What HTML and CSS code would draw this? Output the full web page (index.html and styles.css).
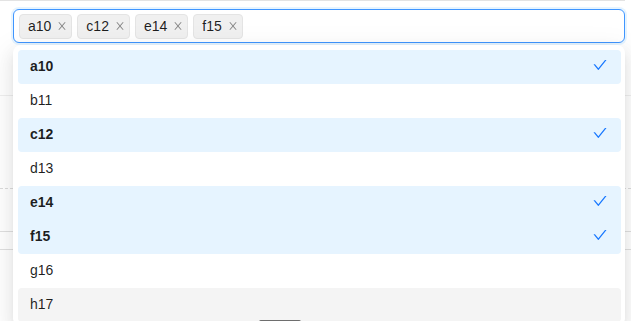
FILE: index.html
```html
<!DOCTYPE html>
<html lang="en">
<head>
    <meta charset="UTF-8">
    <title>Select</title>
    <link rel="stylesheet" href="styles.css">
</head>
<body>
<div class="page">
    <div class="topline"></div>

    <div class="field">
        <div class="select">
            <span class="tag">a10<svg class="tag-close" viewBox="64 64 896 896"><path d="M563.8 512l262.5-312.9c4.4-5.2.7-13.1-6.1-13.1h-79.8c-4.7 0-9.2 2.1-12.3 5.7L511.6 449.8 295.1 191.7c-3-3.6-7.5-5.7-12.3-5.7H203c-6.8 0-10.5 7.9-6.1 13.1L459.4 512 196.9 824.9A7.95 7.95 0 00203 838h79.8c4.7 0 9.2-2.1 12.3-5.7l216.5-258.1 216.5 258.1c3 3.6 7.5 5.7 12.3 5.7h79.8c6.8 0 10.5-7.9 6.1-13.1L563.8 512z"/></svg></span>
            <span class="tag">c12<svg class="tag-close" viewBox="64 64 896 896"><path d="M563.8 512l262.5-312.9c4.4-5.2.7-13.1-6.1-13.1h-79.8c-4.7 0-9.2 2.1-12.3 5.7L511.6 449.8 295.1 191.7c-3-3.6-7.5-5.7-12.3-5.7H203c-6.8 0-10.5 7.9-6.1 13.1L459.4 512 196.9 824.9A7.95 7.95 0 00203 838h79.8c4.7 0 9.2-2.1 12.3-5.7l216.5-258.1 216.5 258.1c3 3.6 7.5 5.7 12.3 5.7h79.8c6.8 0 10.5-7.9 6.1-13.1L563.8 512z"/></svg></span>
            <span class="tag">e14<svg class="tag-close" viewBox="64 64 896 896"><path d="M563.8 512l262.5-312.9c4.4-5.2.7-13.1-6.1-13.1h-79.8c-4.7 0-9.2 2.1-12.3 5.7L511.6 449.8 295.1 191.7c-3-3.6-7.5-5.7-12.3-5.7H203c-6.8 0-10.5 7.9-6.1 13.1L459.4 512 196.9 824.9A7.95 7.95 0 00203 838h79.8c4.7 0 9.2-2.1 12.3-5.7l216.5-258.1 216.5 258.1c3 3.6 7.5 5.7 12.3 5.7h79.8c6.8 0 10.5-7.9 6.1-13.1L563.8 512z"/></svg></span>
            <span class="tag">f15<svg class="tag-close" viewBox="64 64 896 896"><path d="M563.8 512l262.5-312.9c4.4-5.2.7-13.1-6.1-13.1h-79.8c-4.7 0-9.2 2.1-12.3 5.7L511.6 449.8 295.1 191.7c-3-3.6-7.5-5.7-12.3-5.7H203c-6.8 0-10.5 7.9-6.1 13.1L459.4 512 196.9 824.9A7.95 7.95 0 00203 838h79.8c4.7 0 9.2-2.1 12.3-5.7l216.5-258.1 216.5 258.1c3 3.6 7.5 5.7 12.3 5.7h79.8c6.8 0 10.5-7.9 6.1-13.1L563.8 512z"/></svg></span>
        </div>

        <div class="dropdown">
            <div class="option selected">a10 <svg class="check" viewBox="64 64 896 896"><path d="M912 190h-69.9c-9.8 0-19.1 4.5-25.1 12.2L404.7 724.5 207 474a32 32 0 00-25.1-12.2H112c-6.7 0-10.4 7.7-6.3 12.9l273.9 347c12.8 16.2 37.4 16.2 50.3 0l488.4-618.9c4.1-5.1.4-12.8-6.3-12.8z"/></svg></div>
            <div class="option">b11</div>
            <div class="option selected">c12 <svg class="check" viewBox="64 64 896 896"><path d="M912 190h-69.9c-9.8 0-19.1 4.5-25.1 12.2L404.7 724.5 207 474a32 32 0 00-25.1-12.2H112c-6.7 0-10.4 7.7-6.3 12.9l273.9 347c12.8 16.2 37.4 16.2 50.3 0l488.4-618.9c4.1-5.1.4-12.8-6.3-12.8z"/></svg></div>
            <div class="option">d13</div>
            <div class="option selected joined-bottom">e14 <svg class="check" viewBox="64 64 896 896"><path d="M912 190h-69.9c-9.8 0-19.1 4.5-25.1 12.2L404.7 724.5 207 474a32 32 0 00-25.1-12.2H112c-6.7 0-10.4 7.7-6.3 12.9l273.9 347c12.8 16.2 37.4 16.2 50.3 0l488.4-618.9c4.1-5.1.4-12.8-6.3-12.8z"/></svg></div>
            <div class="option selected joined-top">f15 <svg class="check" viewBox="64 64 896 896"><path d="M912 190h-69.9c-9.8 0-19.1 4.5-25.1 12.2L404.7 724.5 207 474a32 32 0 00-25.1-12.2H112c-6.7 0-10.4 7.7-6.3 12.9l273.9 347c12.8 16.2 37.4 16.2 50.3 0l488.4-618.9c4.1-5.1.4-12.8-6.3-12.8z"/></svg></div>
            <div class="option">g16</div>
            <div class="option active">h17</div>
            <div class="scroll-thumb"></div>
        </div>
    </div>

    <div class="backdrop">
        <div class="row row-a"></div>
        <div class="row row-b"></div>
        <div class="row row-c"></div>
        <div class="row row-d"></div>
    </div>
</div>
</body>
</html>
```

FILE: styles.css
```css
body {
    margin: 0;
    padding: 0;
    font-family: 'Liberation Sans', Arial, sans-serif;
    font-size: 14px;
    color: rgba(0, 0, 0, 0.88);
    background: #fff;
}

.page {
    width: 631px;
    height: 321px;
    overflow: hidden;
    position: relative;
}

.topline {
    width: 625px;
    height: 1px;
    background-color: #e3e3e3;
}

.field {
    position: relative;
    width: 612px;
    margin: 8px 0 0 13px;
    z-index: 2;
}

.select {
    box-sizing: border-box;
    height: 34px;
    display: flex;
    align-items: center;
    gap: 5px;
    padding: 0 5px;
    background: #fff;
    border: 1px solid #4096ff;
    border-radius: 6px;
    box-shadow: 0 0 0 2px rgba(5, 145, 255, 0.1);
}

.tag {
    box-sizing: border-box;
    height: 25px;
    display: inline-flex;
    align-items: center;
    padding: 0 4px 0 8px;
    background-color: #f0f0f0;
    border: 1px solid #e4e4e4;
    border-radius: 4px;
    line-height: 22px;
}

.tag-close {
    width: 10px;
    height: 10px;
    margin-left: 6px;
    fill: rgba(0, 0, 0, 0.45);
}

.dropdown {
    position: absolute;
    top: calc(100% + 2px);
    left: 0;
    width: 612px;
    box-sizing: border-box;
    padding: 5px 4px 4px 5px;
    background: #fff;
    border-radius: 8px;
    box-shadow: 0 6px 16px 0 rgba(0, 0, 0, 0.08),
                0 3px 6px -4px rgba(0, 0, 0, 0.12),
                0 9px 28px 8px rgba(0, 0, 0, 0.05);
}

.option {
    height: 34px;
    display: flex;
    align-items: center;
    justify-content: space-between;
    padding: 0 14px 3px 12px;
    box-sizing: border-box;
    border-radius: 4px;
    line-height: 22px;
}

.option.selected {
    background-color: #e6f4ff;
    font-weight: 600;
}

.option.active {
    background-color: #f4f4f4;
}

.joined-bottom {
    border-bottom-left-radius: 0;
    border-bottom-right-radius: 0;
}

.joined-top {
    border-top-left-radius: 0;
    border-top-right-radius: 0;
}

.check {
    width: 14px;
    height: 14px;
    fill: #1677ff;
    margin-bottom: 2px;
}

.scroll-thumb {
    position: absolute;
    left: 246px;
    top: 275px;
    width: 42px;
    height: 4px;
    border-radius: 2px;
    background-color: #6e6e6e;
}

.backdrop {
    width: 631px;
}

.row {
    box-sizing: border-box;
}

.row-a {
    height: 53px;
    border-bottom: 1px solid #efefef;
}

.row-b {
    height: 93px;
    border-bottom: 1px dashed #dcdcdc;
}

.row-c {
    height: 43px;
    border-bottom: 1px solid #e0e0e0;
}

.row-d {
    height: 18px;
    border-bottom: 1px solid #e0e0e0;
}
```
